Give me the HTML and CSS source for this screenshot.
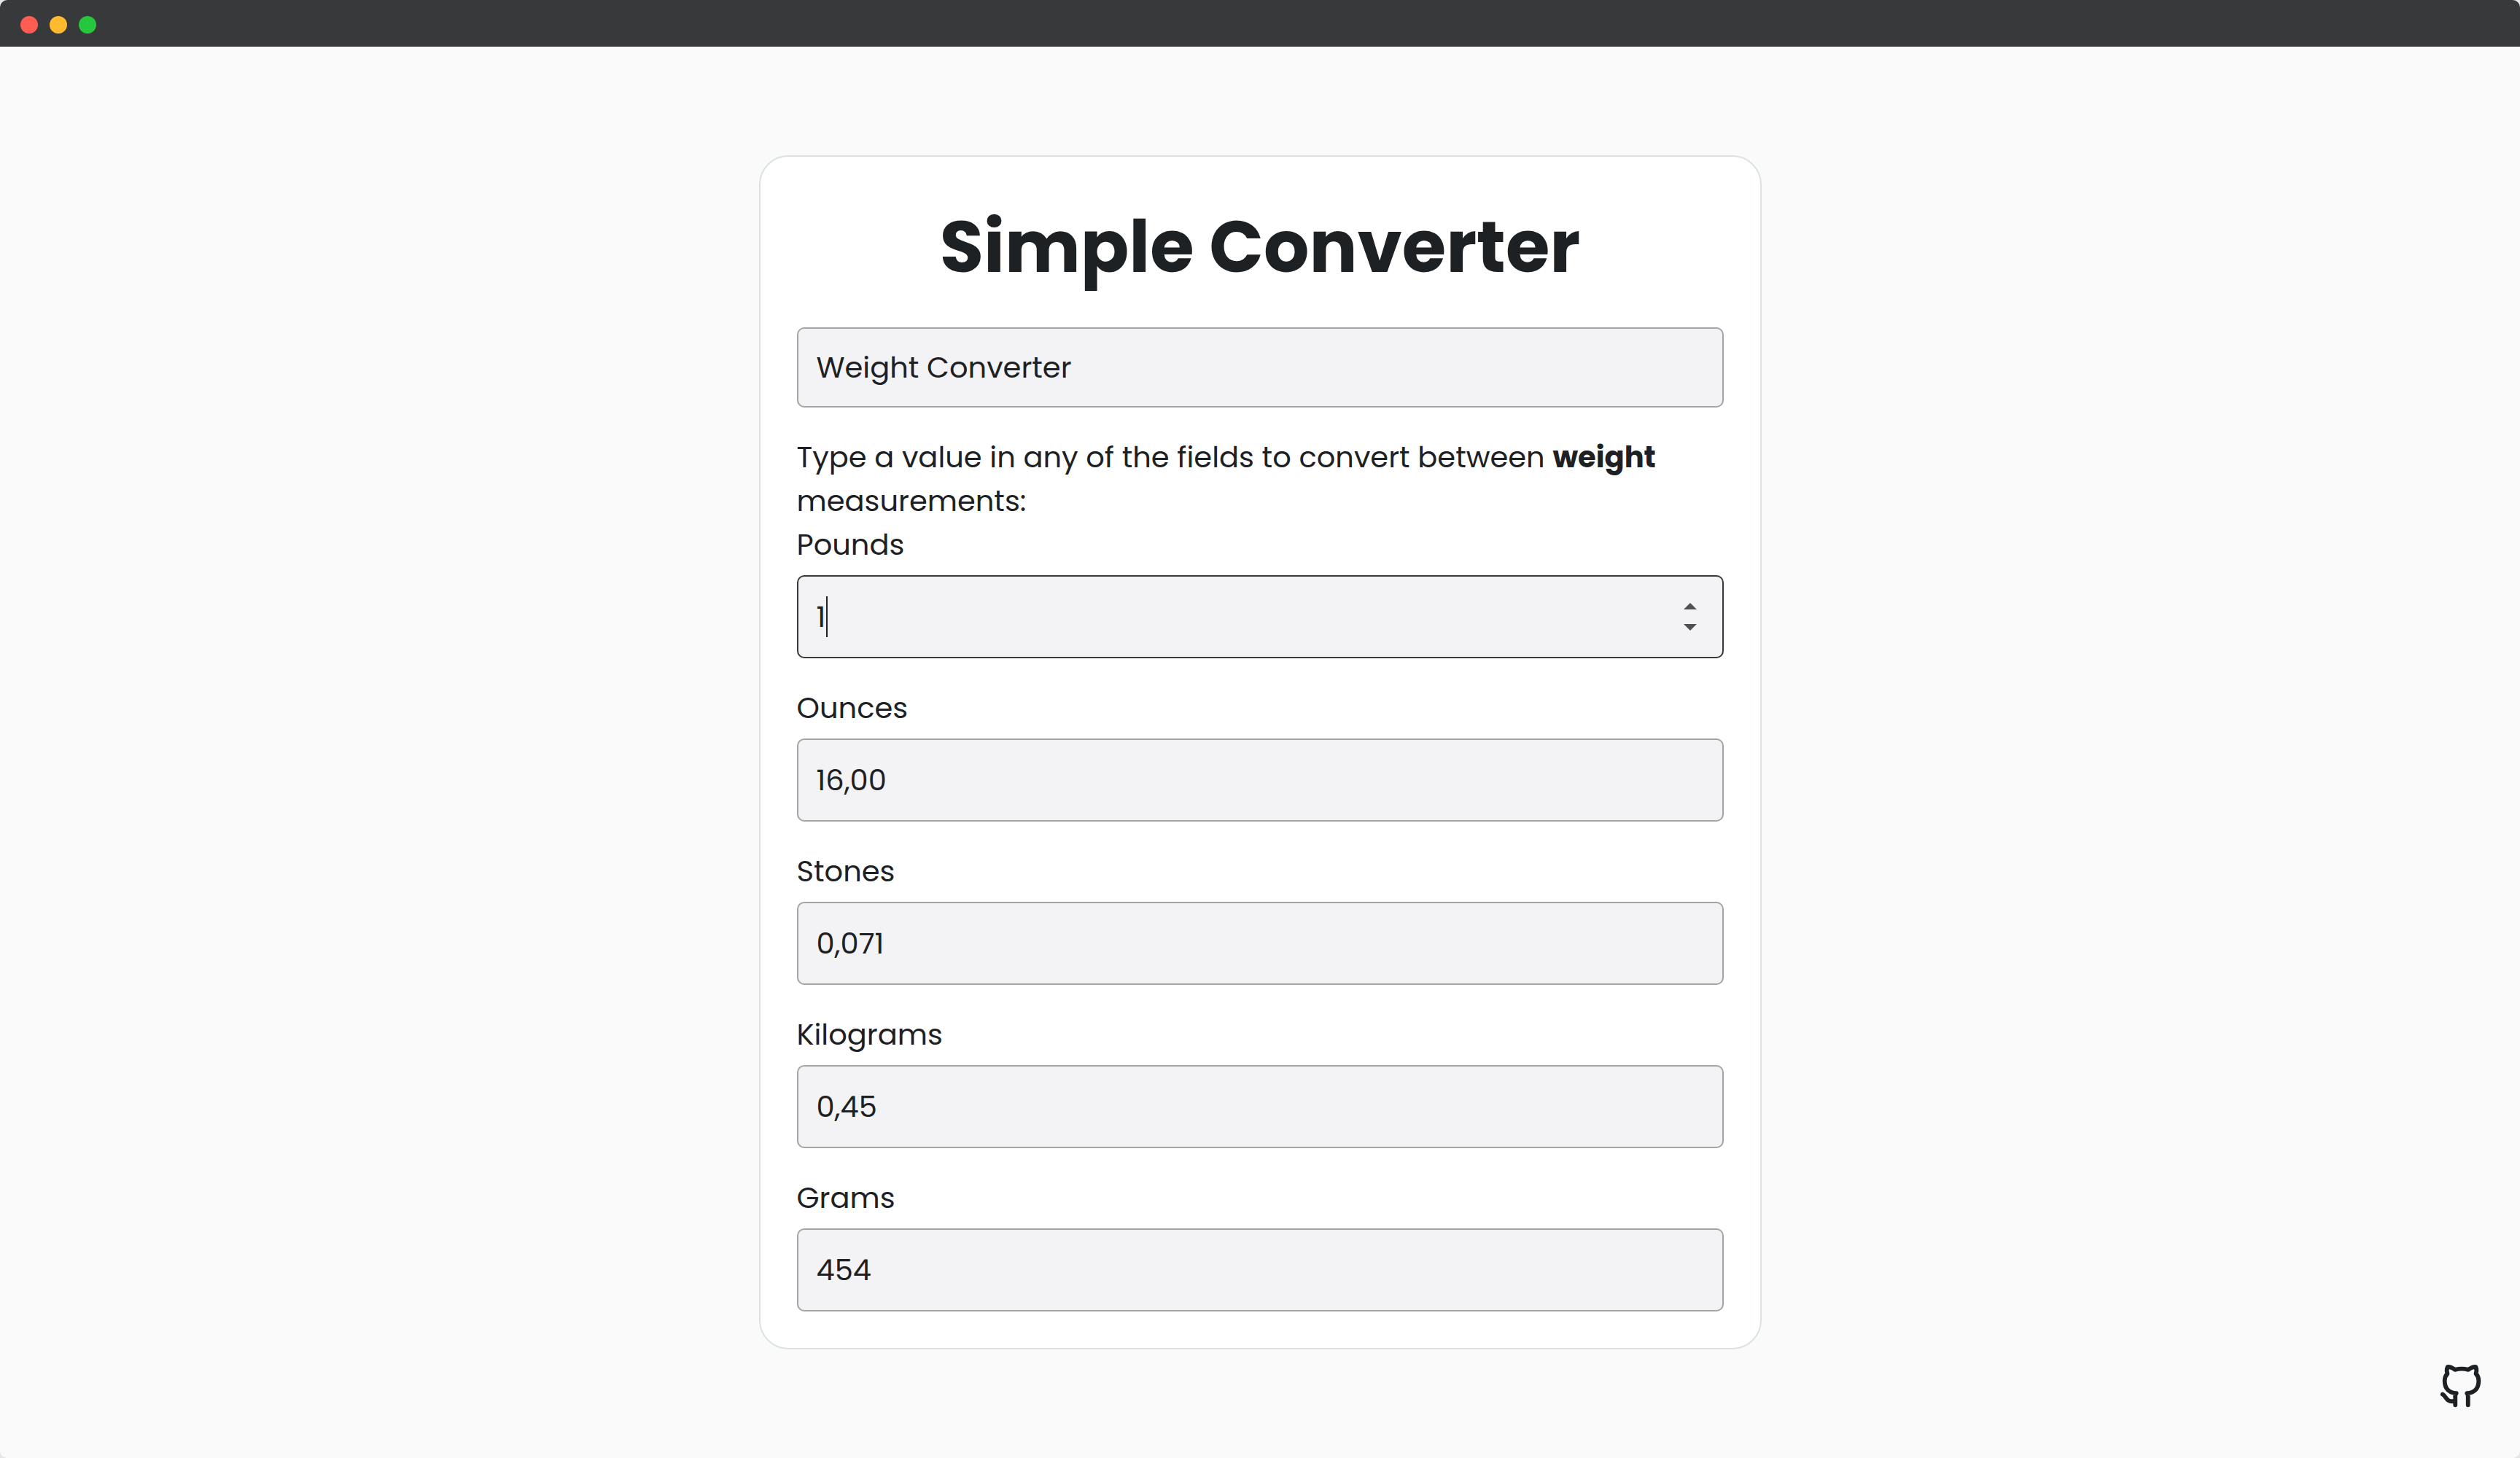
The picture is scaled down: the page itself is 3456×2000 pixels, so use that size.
FILE: index.html
```html
<!DOCTYPE html>
<html lang="en">
<head>
<meta charset="utf-8">
<meta name="viewport" content="width=device-width, initial-scale=1">
<title>Simple Converter</title>
<link rel="stylesheet" href="styles.css">
</head>
<body>
<div class="window">
  <header class="titlebar">
    <span class="dot dot-close"></span>
    <span class="dot dot-minimize"></span>
    <span class="dot dot-zoom"></span>
  </header>
  <main class="page">
    <form class="card">
      <h1 class="title">Simple Converter</h1>
      <select class="control picker" aria-label="Converter">
        <option selected>Weight Converter</option>
      </select>
      <p class="intro">Type a value in any of the fields to convert between <strong>weight</strong> measurements:</p>
      <div class="fields">
        <div class="field">
          <label for="pounds">Pounds</label>
          <div class="number">
            <input class="control active" id="pounds" type="number" value="1">
            <span class="caret"></span>
            <div class="stepper">
              <button class="step" type="button" aria-label="Increase"><svg viewBox="0 0 18 9" width="18" height="9"><path d="M9 0L18 9H0Z"/></svg></button>
              <button class="step" type="button" aria-label="Decrease"><svg viewBox="0 0 18 9" width="18" height="9"><path d="M0 0H18L9 9Z"/></svg></button>
            </div>
          </div>
        </div>
        <div class="field">
          <label for="ounces">Ounces</label>
          <input class="control" id="ounces" type="text" inputmode="decimal" value="16,00">
        </div>
        <div class="field">
          <label for="stones">Stones</label>
          <input class="control" id="stones" type="text" inputmode="decimal" value="0,071">
        </div>
        <div class="field">
          <label for="kilograms">Kilograms</label>
          <input class="control" id="kilograms" type="text" inputmode="decimal" value="0,45">
        </div>
        <div class="field">
          <label for="grams">Grams</label>
          <input class="control" id="grams" type="text" inputmode="decimal" value="454">
        </div>
      </div>
    </form>
  </main>
  <a class="github" href="#" aria-label="GitHub">
    <svg viewBox="0 0 24 24" width="70" height="70" fill="none" stroke="currentColor" stroke-width="2" stroke-linecap="round" stroke-linejoin="round"><path d="M9 19c-4.3 1.4 -4.3 -2.5 -6 -3m12 5v-3.5c0 -1 .1 -1.4 -.5 -2c2.8 -.3 5.5 -1.4 5.5 -6a4.6 4.6 0 0 0 -1.3 -3.2a4.2 4.2 0 0 0 -.1 -3.2s-1.1 -.3 -3.5 1.3a12.3 12.3 0 0 0 -6.2 0c-2.4 -1.6 -3.5 -1.3 -3.5 -1.3a4.2 4.2 0 0 0 -.1 3.2a4.6 4.6 0 0 0 -1.3 3.2c0 4.6 2.7 5.7 5.5 6c-.6 .6 -.6 1.2 -.5 2v3.5"/></svg>
  </a>
</div>
</body>
</html>
```

FILE: styles.css
```css
* {
  box-sizing: border-box;
}

html {
  background: #e3e8e8;
}

body {
  margin: 0;
  font-family: Poppins, Inter, sans-serif;
  font-size: 40px;
  line-height: 60px;
  color: #1d2124;
}

.window {
  display: flex;
  flex-direction: column;
  min-height: 100vh;
  border-radius: 10px;
  overflow: hidden;
  background: #fafafa;
}

.titlebar {
  display: flex;
  align-items: center;
  gap: 16px;
  height: 64px;
  padding: 4px 28px 0;
  background: #38393b;
}

.dot {
  width: 24px;
  height: 24px;
  border-radius: 50%;
}

.dot-close { background: #ff5c54; }
.dot-minimize { background: #ffbb2d; }
.dot-zoom { background: #26c73f; }

.page {
  flex: 1;
  display: flex;
  align-items: center;
  justify-content: center;
}

.card {
  width: 100%;
  max-width: 1375px;
  padding: 50px;
  border: 2px solid #dbe2e4;
  border-radius: 40px;
  background: #fff;
}

.title {
  margin: 0 0 36px;
  font-size: 98px;
  line-height: 148px;
  font-weight: 700;
  text-align: center;
}

.control {
  display: block;
  width: 100%;
  height: 114px;
  padding: 0 25px;
  border: 2px solid #a3a4a6;
  border-radius: 10px;
  outline: none;
  background: #f3f3f5;
  color: inherit;
  font: inherit;
  appearance: none;
}

.control.active {
  border-color: #38393b;
}

.picker {
  height: 110px;
}

.intro {
  margin: 38px 0 0;
}

.fields {
  display: flex;
  flex-direction: column;
  gap: 38px;
}

.field {
  display: flex;
  flex-direction: column;
  gap: 12px;
}

.number {
  position: relative;
}

.number input {
  appearance: textfield;
}

.caret {
  position: absolute;
  top: 29px;
  left: 40px;
  width: 2px;
  height: 56px;
  background: #1d2124;
}

.stepper {
  position: absolute;
  top: 28px;
  right: 32px;
  display: flex;
  flex-direction: column;
}

.step {
  display: flex;
  align-items: center;
  justify-content: center;
  width: 28px;
  height: 29px;
  padding: 0;
  border: 0;
  background: none;
  fill: #4f5052;
}

.github {
  position: fixed;
  right: 45px;
  bottom: 64px;
  display: flex;
  color: #1d2124;
}
```
